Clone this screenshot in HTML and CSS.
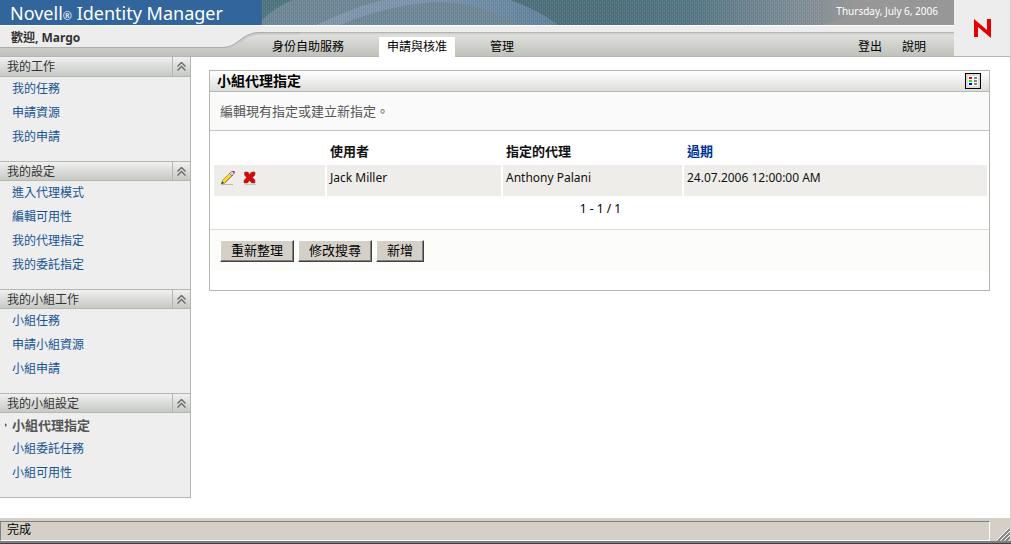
FILE: index.html
```
<!DOCTYPE html>
<html lang="zh-Hant">
<head>
<meta charset="utf-8">
<title>Novell Identity Manager</title>
<link rel="stylesheet" href="styles.css">
</head>
<body>
<svg class="defs" aria-hidden="true">
  <symbol id="collapse" viewBox="0 0 9 9"><path d="M0.5 4.5 4.5 0.5 8.5 4.5M0.5 8.5 4.5 4.5 8.5 8.5" fill="none" stroke="#666b66" stroke-width="1.4"/></symbol>
</svg>
<header class="header">
  <div class="header-main">
    <div class="banner">
      <h1 class="brand">Novell<small>®</small> Identity Manager</h1>
      <div class="banner-art">
        <svg class="art" viewBox="0 0 692 25" preserveAspectRatio="none" aria-hidden="true">
          <defs>
            <linearGradient id="sea"><stop offset="0" stop-color="#4f7680"/><stop offset=".5" stop-color="#4b707c"/><stop offset=".62" stop-color="#557785"/><stop offset=".75" stop-color="#798b96"/><stop offset=".86" stop-color="#979797"/></linearGradient>
            <linearGradient id="swoosh"><stop offset="0" stop-color="#8298ab"/><stop offset=".5" stop-color="#7b94ae"/><stop offset="1" stop-color="#5f829b"/></linearGradient>
            <pattern id="weave" width="4" height="4" patternUnits="userSpaceOnUse"><path d="M0 0h1v3h-1zM2 2h1v2h-1z" fill="#fff" opacity=".1"/><path d="M1 0h1v2h-1zM3 1h1v3h-1z" fill="#123" opacity=".1"/></pattern>
          </defs>
          <rect width="692" height="25" fill="url(#sea)"/>
          <path d="M0 20Q12 8 30 0H248Q276 10 296 25H0Z" fill="#6e8897"/>
          <path d="M54 25Q90 8 120 0H248Q276 10 296 25H258Q220 3 180 2 130 3 78 25Z" fill="url(#swoosh)"/>
          <path d="M560 25Q600 12 640 0H692V25Z" fill="#979797"/>
          <rect width="560" height="25" fill="url(#weave)"/>
        </svg>
        <time class="date" datetime="2006-07-06">Thursday, July 6, 2006</time>
      </div>
    </div>
    <div class="bar">
      <svg class="curve" width="300" height="32" viewBox="0 0 300 32" aria-hidden="true">
        <path d="M0 1H300V7H262C238 7 240 22 222 22H0Z" fill="#ededed"/>
        <path d="M0 23.5H222C241 23.5 240 8.500 262 8.500H300" fill="none" stroke="#c9cac7" stroke-width="2"/>
        <path d="M0 22.500H222C240 22.500 239 7.500 262 7.500H300" fill="none" stroke="#adafab"/>
      </svg>
      <div class="welcome">歡迎, Margo</div>
      <nav class="tabs">
        <a href="#">身份自助服務</a>
        <a href="#" class="active">申請與核准</a>
        <a href="#">管理</a>
      </nav>
      <nav class="tools"><a href="#">登出</a><a href="#">說明</a></nav>
    </div>
  </div>
  <div class="logo">
    <svg width="17" height="19" viewBox="0 0 17 19" role="img" aria-label="Novell"><path d="M0 0 13 11V0H17V19L4 8V18H0Z" fill="#e60000"/></svg>
  </div>
</header>

<div class="body">
  <aside class="sidebar">
    <section>
      <h2><span>我的工作</span><button type="button" aria-label="收合我的工作"><svg width="9" height="9"><use href="#collapse"/></svg></button></h2>
      <ul><li><a href="#">我的任務</a></li><li><a href="#">申請資源</a></li><li><a href="#">我的申請</a></li></ul>
    </section>
    <section>
      <h2><span>我的設定</span><button type="button" aria-label="收合我的設定"><svg width="9" height="9"><use href="#collapse"/></svg></button></h2>
      <ul><li><a href="#">進入代理模式</a></li><li><a href="#">編輯可用性</a></li><li><a href="#">我的代理指定</a></li><li><a href="#">我的委託指定</a></li></ul>
    </section>
    <section>
      <h2><span>我的小組工作</span><button type="button" aria-label="收合我的小組工作"><svg width="9" height="9"><use href="#collapse"/></svg></button></h2>
      <ul><li><a href="#">小組任務</a></li><li><a href="#">申請小組資源</a></li><li><a href="#">小組申請</a></li></ul>
    </section>
    <section>
      <h2><span>我的小組設定</span><button type="button" aria-label="收合我的小組設定"><svg width="9" height="9"><use href="#collapse"/></svg></button></h2>
      <ul><li class="current"><a href="#">小組代理指定</a></li><li><a href="#">小組委託任務</a></li><li><a href="#">小組可用性</a></li></ul>
    </section>
  </aside>

  <main class="content">
    <section class="panel">
      <div class="panel-head">
        <h2>小組代理指定</h2>
        <button type="button" class="legend" aria-label="圖例">
          <svg width="10" height="10" viewBox="0 0 10 10"><rect width="10" height="10" fill="#fff"/><path d="M1 1h3v2H1z" fill="#f00"/><path d="M1 4h3v2H1z" fill="#0f0"/><path d="M1 7h3v2H1z" fill="#00f"/><path d="M6 1h3v2H6zM6 4h3v2H6zM6 7h3v2H6z" fill="#808080"/></svg>
        </button>
      </div>
      <p class="intro">編輯現有指定或建立新指定。</p>
      <div class="results">
        <table>
          <thead><tr><th class="c-act"></th><th class="c-user">使用者</th><th class="c-proxy">指定的代理</th><th><a href="#">過期</a></th></tr></thead>
          <tbody><tr>
            <td class="actions"><div>
              <button type="button" aria-label="編輯"><svg width="16" height="16" viewBox="0 0 16 16"><path d="M1 14.500H13" stroke="#b9b8b6"/><path d="M1.500 13.500 2.500 10.500 10 3 12.500 5.500 5 13Z" fill="#ffe01c" stroke="#7a6030" stroke-width=".6"/><path d="M4.500 12.500 12 5" stroke="#f09a20" stroke-width="1"/><path d="M9.500 3.500 11.500 1.500H14V3.500L12 6Z" fill="#dcd2ee" stroke="#6a5580" stroke-width=".7"/><path d="M12 1H14.500V3.500Z" fill="#a02838"/><path d="M1 14 2.500 11.500 4 13Z" fill="#333"/></svg></button>
              <button type="button" aria-label="刪除"><svg width="14" height="14" viewBox="0 0 14 14"><path d="M2 13.500H13" stroke="#c9c8c4"/><path d="M1.500 1H5L6.500 3.500 8.500 1H12V4L9.500 6.500 12 9V12H8.500L6.500 9.500 4.500 12H1V9.500L3.500 6.500 1.500 4Z" fill="#cf0a0a" stroke="#a83030" stroke-width=".5"/></svg></button>
            </div></td>
            <td>Jack Miller</td><td>Anthony Palani</td><td>24.07.2006 12:00:00 AM</td>
          </tr></tbody>
        </table>
        <p class="pager">1 - 1 / 1</p>
      </div>
      <div class="buttons">
        <button type="button">重新整理</button>
        <button type="button">修改搜尋</button>
        <button type="button">新增</button>
      </div>
    </section>
  </main>
</div>

<footer class="status">
  <div class="status-text">完成</div>
  <svg class="grip" width="13" height="13" viewBox="0 0 13 13" aria-hidden="true"><path d="M1 13 13 1M5 13 13 5M9 13 13 9" stroke="#808080" stroke-width="1.800"/><path d="M0 12 12 0M4 12 13 3M8 12 13 7" stroke="#fff"/></svg>
</footer>
</body>
</html>
```
FILE: styles.css
```
* { box-sizing: border-box; }

body {
  margin: 0;
  min-height: 100vh;
  display: flex;
  flex-direction: column;
  background: #fff;
  color: #111;
  font: 12px/16px "Noto Sans", "Noto Sans CJK TC", sans-serif;
}

h1, h2, p, ul { margin: 0; padding: 0; }
ul { list-style: none; }
a { color: inherit; text-decoration: none; }
button { font: inherit; color: inherit; cursor: pointer; }
svg { display: block; }
.defs { position: absolute; width: 0; height: 0; }

/* Header */
.header { display: flex; border-right: 1px solid #d4d0c8; }
.header-main { flex: 1; min-width: 0; }
.banner { display: flex; height: 25px; }
.brand {
  flex: 0 0 262px;
  padding-left: 10px;
  background: #31659c;
  color: #fff;
  font: 18px/26px "Noto Sans", sans-serif;
  white-space: nowrap;
}
.brand small { font-size: 11px; }
.banner-art { position: relative; flex: 1; display: flex; justify-content: flex-end; overflow: hidden; }
.art { position: absolute; inset: 0; width: 100%; height: 100%; }
.date { position: relative; padding-right: 16px; color: #fff; font-size: 10px; line-height: 22px; }
.bar {
  position: relative;
  display: flex;
  align-items: flex-end;
  height: 32px;
  border-bottom: 1px solid #b5b7b1;
  background: linear-gradient(#fff 0 1px, #ededed 1px 7px, #b5b6b4 7px 8px, #d0d1cf 8px 9px, #dfe0dd 10px, #bfc1bb 31px);
}
.curve { position: absolute; left: 0; top: 0; }
.welcome { position: relative; flex: 0 0 264px; align-self: flex-start; padding: 5px 0 0 11px; color: #333; font-weight: bold; }
.tabs { position: relative; display: flex; gap: 27px; flex: 1; color: #000; }
.tabs a { padding: 2px 8px 1px; }
.tabs .active { background: #fff; margin-bottom: -1px; }
.tools { display: flex; gap: 20px; padding: 0 28px 1px 0; color: #000; }
.logo { flex: 0 0 56px; display: flex; align-items: center; justify-content: center; border-bottom: 1px solid #b5b7b1; background: #ededed; }

/* Body */
.body { flex: 1; display: flex; align-items: flex-start; border-right: 1px solid #d4d0c8; }

.sidebar { flex: 0 0 191px; border: solid #b5b7b1; border-width: 0 1px 1px 0; background: #eee; }
.sidebar h2 {
  display: flex;
  height: 20px;
  border-bottom: 1px solid #b5b7b1;
  background: linear-gradient(#f0f0f0, #c6c9c4);
  color: #333;
  font-size: 12px;
  font-weight: normal;
  line-height: 19px;
}
.sidebar section + section h2 { border-top: 1px solid #b5b7b1; }
.sidebar h2 span { flex: 1; padding-left: 7px; }
.sidebar h2 button { display: flex; align-items: center; justify-content: center; width: 18px; padding: 0; border: 0; border-left: 1px solid #b5b7b1; background: none; }
.sidebar ul { padding-bottom: 12px; }
.sidebar li { padding-left: 12px; color: #185394; line-height: 24px; }
.sidebar .current { color: #555; font-size: 13px; font-weight: bold; padding-left: 5px; display: flex; align-items: center; gap: 5px; }
.sidebar .current::before { content: ""; border: solid transparent; border-width: 2px 0 2px 2px; border-left-color: #555; }

.content { flex: 1; min-width: 0; padding: 13px 20px 20px 18px; }
.panel { padding-bottom: 19px; border: 1px solid #b5b7b1; }
.panel-head {
  display: flex;
  align-items: center;
  justify-content: space-between;
  height: 21px;
  padding: 0 8px 0 7px;
  border-bottom: 1px solid #b5b7b1;
  background: linear-gradient(#fff, #dcdedb);
}
.panel-head h2 { color: #000; font-size: 14px; line-height: 20px; }
.legend { display: flex; align-items: center; justify-content: center; width: 16px; height: 16px; padding: 0; border: 1px solid #000; background: #dcdedb; }
.intro { padding: 10px 10px; border-bottom: 1px solid #c4c4c4; background: #fafafa; color: #555; font-size: 13px; line-height: 18px; }

.results { padding: 8px 0 12px 2px; border-bottom: 1px solid #ddd; }
table { width: 100%; border-collapse: separate; border-spacing: 2px 0; table-layout: fixed; }
th, td { padding: 0 3px; text-align: left; vertical-align: top; }
th { height: 26px; padding-top: 2px; font-size: 13px; line-height: 20px; }
th a { color: #039; }
.c-act { width: 111px; }
.c-user { width: 174px; }
.c-proxy { width: 179px; }
td { height: 31px; padding-top: 5px; background: #eeede9; }
.actions div { display: flex; gap: 7px; padding-left: 3px; }
.actions button { display: flex; align-items: center; padding: 0; border: 0; background: none; }
.pager { padding-top: 5px; color: #000; text-align: center; }

.buttons { display: flex; gap: 4px; padding: 10px 10px 9px; background: #fcfcfa; }
.buttons button {
  height: 22px;
  padding: 0 10px 2px;
  border: 1px solid;
  border-color: #fff #404040 #404040 #fff;
  box-shadow: inset -1px -1px #808080;
  background: #d4d0c8;
  color: #000;
  font-size: 13px;
  line-height: 18px;
}

/* Status bar */
.status { display: flex; align-items: flex-end; height: 26px; padding: 2px 1px 3px 0; background: linear-gradient(#d4d0c8 0 23px, #808080 23px 25px, #404040 25px); }
.status-text { flex: 1; height: 20px; margin-right: 7px; padding-left: 6px; border: 1px solid; border-color: #808080 #fff #fff #808080; color: #000; }
```
